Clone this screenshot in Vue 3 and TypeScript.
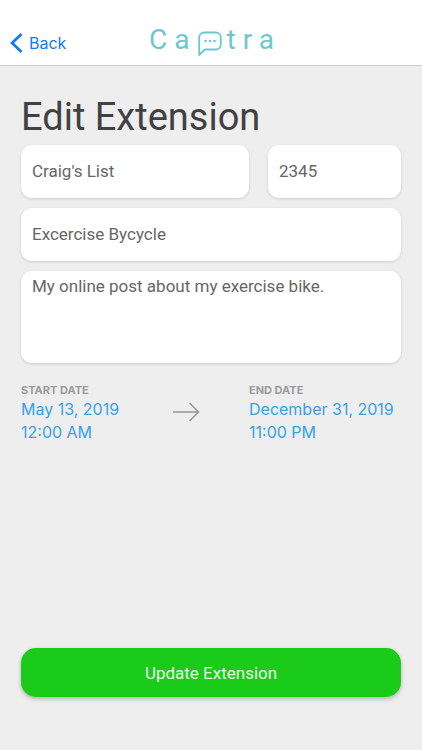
<script setup lang="ts">
import { reactive } from 'vue'

interface Extension {
  name: string
  code: string
  title: string
  description: string
}

interface Moment {
  label: string
  date: string
  time: string
}

const extension = reactive<Extension>({
  name: "Craig's List",
  code: '2345',
  title: 'Excercise Bycycle',
  description: 'My online post about my exercise bike.',
})

const start: Moment = { label: 'START DATE', date: 'May 13, 2019', time: '12:00 AM' }
const end: Moment = { label: 'END DATE', date: 'December 31, 2019', time: '11:00 PM' }
</script>

<template>
  <div class="screen">
    <header class="navbar">
      <a class="back" href="#">
        <svg class="chevron" viewBox="0 0 14 22" aria-hidden="true">
          <path d="M12.4 1.2 2.2 11 12.4 20.8" />
        </svg>
        <span>Back</span>
      </a>
      <div class="brand">
        <span>Ca</span>
        <svg class="bubble" viewBox="0 0 24 26" aria-hidden="true">
          <path d="M1.2 24V6.5A5 5 0 0 1 6.2 1.5H17.8A5 5 0 0 1 22.8 6.5V13.5A5 5 0 0 1 17.8 18.5H7Z" />
          <circle cx="7.5" cy="10" r="1.3" />
          <circle cx="12" cy="10" r="1.3" />
          <circle cx="16.5" cy="10" r="1.3" />
        </svg>
        <span>tra</span>
      </div>
    </header>

    <form class="form" @submit.prevent>
      <h1>Edit Extension</h1>
      <div class="fields">
        <input v-model="extension.name" class="field" type="text" aria-label="Name" />
        <input v-model="extension.code" class="field" type="text" inputmode="numeric" aria-label="Extension" />
        <input v-model="extension.title" class="field wide" type="text" aria-label="Title" />
        <textarea v-model="extension.description" class="field wide notes" aria-label="Description"></textarea>
      </div>

      <div class="dates">
        <div class="moment">
          <span id="start-label" class="caption">{{ start.label }}</span>
          <button type="button" class="value" aria-describedby="start-label">
            {{ start.date }}<br />{{ start.time }}
          </button>
        </div>
        <svg class="arrow" viewBox="0 0 28 20" aria-hidden="true">
          <path d="M0 10H25.5M16.5 1 25.5 10 16.5 19" />
        </svg>
        <div class="moment">
          <span id="end-label" class="caption">{{ end.label }}</span>
          <button type="button" class="value" aria-describedby="end-label">
            {{ end.date }}<br />{{ end.time }}
          </button>
        </div>
      </div>

      <button class="submit" type="submit">Update Extension</button>
    </form>
  </div>
</template>

<style>
body {
  margin: 0;
  background: #eee;
}
</style>

<style scoped>
.screen {
  display: flex;
  flex-direction: column;
  min-height: 100vh;
  box-sizing: border-box;
  background: #eee;
  font-family: Inter, 'Liberation Sans', sans-serif;
  font-size: 16px;
}

.navbar {
  display: grid;
  grid-template-columns: 1fr auto 1fr;
  align-items: center;
  height: 45px;
  padding: 20px 10px 0;
  background: #fff;
  border-bottom: 1px solid #ccc;
}

.back {
  display: flex;
  align-items: center;
  gap: 6px;
  color: #107cf4;
  text-decoration: none;
}

.chevron {
  width: 13px;
  height: 22px;
  fill: none;
  stroke: currentColor;
  stroke-width: 3;
}

.brand {
  display: flex;
  align-items: center;
  height: 38px;
  padding: 0 0 6px 8px;
  box-sizing: border-box;
  color: #6cc7d3;
  font: 28px/32px Roboto, sans-serif;
  letter-spacing: 7px;
}

.bubble {
  width: 24px;
  height: 26px;
  margin: 8px 5px 0 1px;
  fill: none;
  stroke: currentColor;
  stroke-width: 1.8;
  stroke-linejoin: round;
}

.bubble circle {
  fill: currentColor;
  stroke: none;
}

.form {
  display: flex;
  flex: 1;
  flex-direction: column;
  padding: 27px 21px 53px;
}

h1 {
  margin: 0 0 4px;
  color: #414143;
  font-family: Roboto, sans-serif;
  font-size: 38px;
  font-weight: 400;
  line-height: 48px;
}

.fields {
  display: grid;
  grid-template-columns: 12fr 7fr;
  gap: 10px 19px;
}

.field {
  width: 100%;
  min-width: 0;
  height: 53px;
  padding: 0 11px 2px;
  box-sizing: border-box;
  border: 0;
  border-radius: 11px;
  outline: 0;
  background: #fff;
  box-shadow: 0 1px 3px rgb(0 0 0 / 14%);
  color: #666;
  font-family: Roboto, sans-serif;
  font-size: 17px;
}

.wide {
  grid-column: 1 / -1;
}

.notes {
  display: block;
  height: 92px;
  padding-top: 4px;
  line-height: 23px;
  resize: none;
}

.dates {
  display: grid;
  grid-template-columns: 2fr 1fr 2fr;
  margin-top: 20px;
}

.moment {
  display: flex;
  flex-direction: column;
  align-items: flex-start;
}

.caption {
  color: #9b9b9b;
  font-size: 11px;
  font-weight: 700;
  line-height: 15px;
}

.value {
  padding: 0;
  border: 0;
  background: none;
  color: #3aa0e8;
  font: inherit;
  line-height: 23px;
  text-align: left;
  white-space: nowrap;
}

.arrow {
  width: 28px;
  height: 20px;
  margin-top: 19px;
  fill: none;
  stroke: #979797;
  stroke-width: 1.5;
}

.submit {
  height: 49px;
  margin-top: auto;
  border: 0;
  border-radius: 15px;
  background: #1acb1a;
  box-shadow: 0 2px 4px rgb(0 0 0 / 25%);
  color: #e6fae6;
  font-family: Roboto, sans-serif;
  font-size: 17px;
}
</style>
